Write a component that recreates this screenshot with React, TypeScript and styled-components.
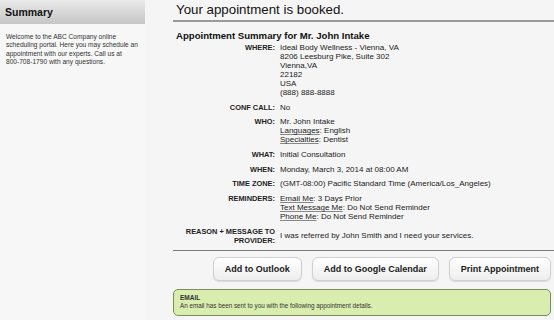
import styled, { createGlobalStyle } from 'styled-components';

const GlobalStyle = createGlobalStyle`
  html, body {
    margin: 0;
    padding: 0;
    background: #f5f5f5;
    font-family: "Liberation Sans", Arial, sans-serif;
    color: #222;
  }
`;

const Page = styled.div`
  display: flex;
  width: 554px;
  height: 320px;
  overflow: hidden;
  background: #f5f5f5;
`;

const Sidebar = styled.aside`
  width: 145px;
  flex-shrink: 0;
  background: #f7f7f7;
`;

const SidebarHeader = styled.div`
  height: 24px;
  display: flex;
  align-items: center;
  padding-left: 5px;
  background: linear-gradient(#e9e9e9, #c6c6c6);
  font-size: 10.5px;
  font-weight: 700;
  color: #111;
`;

const Intro = styled.p`
  margin: 0;
  padding: 9px 6px;
  font-size: 6.6px;
  line-height: 8.3px;
  white-space: nowrap;
  color: #333;
`;

const Main = styled.main`
  flex: 1;
  margin-left: 28px;
  padding-right: 3px;
  display: flex;
  flex-direction: column;
`;

const Title = styled.h1`
  margin: 0 -3px 0 0;
  padding: 2px 3px 3px;
  font-size: 13.3px;
  font-weight: 400;
  color: #111;
  border-bottom: 2px solid #9a9a9a;
`;

const SummaryHeading = styled.h2`
  margin: 8px 0 2px 3px;
  font-size: 9.6px;
  font-weight: 700;
  color: #111;
`;

const Details = styled.dl`
  margin: 0 0 5px;
  display: grid;
  grid-template-columns: 102px 1fr;
  column-gap: 5px;
  row-gap: 5.7px;
`;

const Label = styled.dt`
  text-align: right;
  font-size: 7.4px;
  font-weight: 700;
  line-height: 9px;
  text-transform: uppercase;
  color: #222;
`;

const Value = styled.dd<{ $center?: boolean }>`
  margin: 0;
  font-size: 8px;
  line-height: 9px;
  color: #222;
  align-self: ${(p) => (p.$center ? 'center' : 'start')};
`;

const Term = styled.span`
  text-decoration: underline;
  text-decoration-color: #888;
`;

const Divider = styled.hr`
  margin: 0 -3px 0 0;
  border: none;
  border-top: 1px solid #7a7a7a;
`;

const ButtonRow = styled.div`
  display: flex;
  justify-content: flex-end;
  gap: 10px;
  margin-top: 6px;
`;

const Button = styled.button`
  height: 24px;
  padding: 0 11px;
  border: 1px solid #cfcfcf;
  border-radius: 6px;
  background: linear-gradient(#ffffff, #ededed);
  box-shadow: 0 1px 1px rgba(0, 0, 0, 0.12);
  font-family: "Liberation Sans", Arial, sans-serif;
  font-size: 9px;
  font-weight: 700;
  color: #1a1a1a;
`;

const Notice = styled.div`
  margin-top: 8px;
  padding: 4px 6px 5px;
  border: 1px solid #7d8c5f;
  border-radius: 5px;
  background: #d9eeae;
  font-size: 6.3px;
  line-height: 8px;
  color: #333;
`;

const NoticeTitle = styled.div`
  font-weight: 700;
  font-size: 6.5px;
`;

export default function App() {
  return (
    <>
      <GlobalStyle />
      <Page>
        <Sidebar>
          <SidebarHeader>Summary</SidebarHeader>
          <Intro>
            Welcome to the ABC Company online
            <br />
            scheduling portal. Here you may schedule an
            <br />
            appointment with our experts. Call us at
            <br />
            800-708-1790 with any questions.
          </Intro>
        </Sidebar>
        <Main>
          <Title>Your appointment is booked.</Title>
          <SummaryHeading>Appointment Summary for Mr. John Intake</SummaryHeading>
          <Details>
            <Label>Where:</Label>
            <Value>
              Ideal Body Wellness - Vienna, VA
              <br />
              8206 Leesburg Pike, Suite 302
              <br />
              Vienna,VA
              <br />
              22182
              <br />
              USA
              <br />
              (888) 888-8888
            </Value>
            <Label>Conf Call:</Label>
            <Value>No</Value>
            <Label>Who:</Label>
            <Value>
              Mr. John Intake
              <br />
              <Term>Languages</Term>: English
              <br />
              <Term>Specialties</Term>: Dentist
            </Value>
            <Label>What:</Label>
            <Value>Initial Consultation</Value>
            <Label>When:</Label>
            <Value>Monday, March 3, 2014 at 08:00 AM</Value>
            <Label>Time Zone:</Label>
            <Value>(GMT-08:00) Pacific Standard Time (America/Los_Angeles)</Value>
            <Label>Reminders:</Label>
            <Value>
              <Term>Email Me</Term>: 3 Days Prior
              <br />
              <Term>Text Message Me</Term>: Do Not Send Reminder
              <br />
              <Term>Phone Me</Term>: Do Not Send Reminder
            </Value>
            <Label>
              Reason + Message to
              <br />
              Provider:
            </Label>
            <Value $center>I was referred by John Smith and I need your services.</Value>
          </Details>
          <Divider />
          <ButtonRow>
            <Button>Add to Outlook</Button>
            <Button>Add to Google Calendar</Button>
            <Button>Print Appointment</Button>
          </ButtonRow>
          <Notice>
            <NoticeTitle>EMAIL</NoticeTitle>
            An email has been sent to you with the following appointment details.
          </Notice>
        </Main>
      </Page>
    </>
  );
}
